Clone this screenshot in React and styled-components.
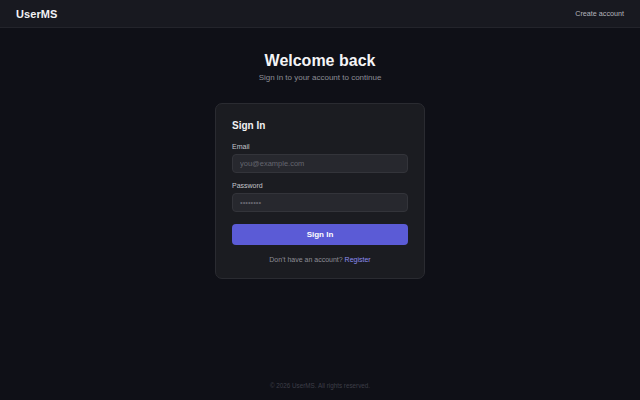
import React from 'react'
import styled, { createGlobalStyle } from 'styled-components'

const GlobalStyle = createGlobalStyle`
  html, body {
    margin: 0;
    padding: 0;
    background: #0f1017;
    font-family: "Liberation Sans", Arial, sans-serif;
  }
  * { box-sizing: border-box; }
`

const Page = styled.div`
  display: flex;
  flex-direction: column;
  width: 640px;
  height: 400px;
  background: #0f1017;
`
const Header = styled.header`
  display: flex;
  justify-content: space-between;
  align-items: center;
  height: 28px;
  padding: 0 16px;
  background: #181920;
  border-bottom: 1px solid #23242b;
`
const Brand = styled.div`
  color: #f2f2f4;
  font-size: 11px;
  font-weight: 700;
  letter-spacing: 0.1px;
`
const HeaderLink = styled.a`
  color: #b4b5bc;
  font-size: 7.2px;
  text-decoration: none;
`
const Main = styled.main`
  flex: 1;
  display: flex;
  flex-direction: column;
  align-items: center;
  padding-top: 23px;
`
const Title = styled.h1`
  margin: 0;
  color: #f4f4f6;
  font-size: 16px;
  font-weight: 700;
  line-height: 19px;
`
const Subtitle = styled.p`
  margin: 3px 0 0;
  color: #8c8d96;
  font-size: 8px;
  line-height: 10px;
`
const Card = styled.div`
  width: 210px;
  margin-top: 20px;
  padding: 16px 16px 14px;
  background: #1b1c21;
  border: 1px solid #2a2b31;
  border-radius: 7px;
`
const CardTitle = styled.h2`
  margin: 0 0 11px;
  color: #f2f2f4;
  font-size: 10px;
  font-weight: 700;
  line-height: 12px;
`
const Field = styled.div`
  display: flex;
  flex-direction: column;
  gap: 3px;
  margin-bottom: ${(props) => (props.last ? '12px' : '9px')};
`
const Label = styled.label`
  color: #c3c4ca;
  font-size: 7px;
  line-height: 8px;
`
const Input = styled.input`
  width: 100%;
  height: 19px;
  padding: 0 7px;
  background: #27282e;
  border: 1px solid #33343a;
  border-radius: 4px;
  color: #e6e6ea;
  font-family: inherit;
  font-size: 7.5px;
  outline: none;
  &::placeholder {
    color: #65666e;
  }
`
const Button = styled.button`
  display: block;
  width: 100%;
  height: 21px;
  padding: 0;
  background: #5b5bd6;
  border: none;
  border-radius: 4px;
  color: #ffffff;
  font-family: inherit;
  font-size: 8px;
  font-weight: 700;
`
const Footnote = styled.p`
  margin: 10px 0 0;
  text-align: center;
  color: #8c8d96;
  font-size: 7px;
  line-height: 9px;
`
const Link = styled.a`
  color: #8b8cf0;
  text-decoration: none;
`
const Footer = styled.footer`
  padding-bottom: 10px;
  text-align: center;
  color: #3d3e47;
  font-size: 6.3px;
  line-height: 8px;
`

export default function App() {
  return (
    <Page>
      <GlobalStyle />
      <Header>
        <Brand>UserMS</Brand>
        <HeaderLink href="#">Create account</HeaderLink>
      </Header>
      <Main>
        <Title>Welcome back</Title>
        <Subtitle>Sign in to your account to continue</Subtitle>
        <Card>
          <CardTitle>Sign In</CardTitle>
          <Field>
            <Label>Email</Label>
            <Input type="email" placeholder="you@example.com" />
          </Field>
          <Field last>
            <Label>Password</Label>
            <Input type="password" placeholder="••••••••" />
          </Field>
          <Button>Sign In</Button>
          <Footnote>
            Don't have an account? <Link href="#">Register</Link>
          </Footnote>
        </Card>
      </Main>
      <Footer>© 2026 UserMS. All rights reserved.</Footer>
    </Page>
  )
}
